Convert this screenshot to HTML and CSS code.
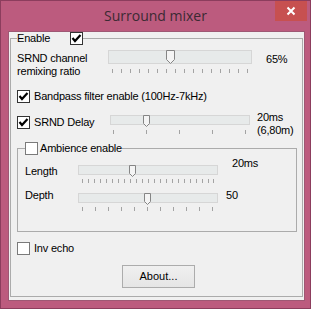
FILE: index.html
```html
<!DOCTYPE html>
<html lang="en">
<head>
  <meta charset="UTF-8">
  <title>Surround mixer</title>
  <link rel="stylesheet" href="styles.css">
</head>
<body>

  <div class="window">
    <div class="titlebar">
      <span></span>
      <span class="title">Surround mixer</span>
      <span class="caption">
        <span class="close">
          <svg width="10" height="10" viewBox="0 0 10 10"><path d="M1.5 1.5 L8.5 8.5 M8.5 1.5 L1.5 8.5" stroke="#fff" stroke-width="2"/></svg>
        </span>
      </span>
    </div>

    <div class="client">
      <fieldset class="group main">
        <legend class="legend">
          <span class="enable-label">Enable</span>
          <span class="check on"><svg width="11" height="11" viewBox="0 0 11 11"><polyline points="1.5,5 4,8 9.5,2" fill="none" stroke="#000" stroke-width="2.2"/></svg></span>
        </legend>

        <div class="row row-ratio">
          <div class="label">SRND channel<br>remixing ratio</div>
          <div class="slider">
            <div class="track big"><span class="thumb" style="left:57px"><svg width="9" height="14"><polygon points="0.5,0.5 8.5,0.5 8.5,9.5 4.5,13.5 0.5,9.5" fill="#f4f4f4" stroke="#858585"/></svg></span></div>
            <div class="ticks ticks-ratio"></div>
          </div>
          <div class="value">65%</div>
        </div>

        <label class="check-row bandpass">
          <span class="check on"><svg width="11" height="11" viewBox="0 0 11 11"><polyline points="1.5,5 4,8 9.5,2" fill="none" stroke="#000" stroke-width="2.2"/></svg></span>
          Bandpass filter enable (100Hz-7kHz)
        </label>

        <div class="row row-delay">
          <label class="check-row">
            <span class="check on"><svg width="11" height="11" viewBox="0 0 11 11"><polyline points="1.5,5 4,8 9.5,2" fill="none" stroke="#000" stroke-width="2.2"/></svg></span>
            SRND Delay
          </label>
          <div class="slider">
            <div class="track"><span class="thumb" style="left:32px"><svg width="7" height="12"><polygon points="0.5,0.5 6.5,0.5 6.5,8.5 3.5,11.5 0.5,8.5" fill="#f4f4f4" stroke="#858585"/></svg></span></div>
            <div class="ticks ticks-delay"></div>
          </div>
          <div class="value">20ms<br>(6,80m)</div>
        </div>

        <fieldset class="group ambience">
          <legend class="legend">
            <span class="check"></span>
            <span class="amb-label">Ambience enable</span>
          </legend>

          <div class="row row-length">
            <div class="label">Length</div>
            <div class="slider">
              <div class="track"><span class="thumb" style="left:50px"><svg width="7" height="12"><polygon points="0.5,0.5 6.5,0.5 6.5,8.5 3.5,11.5 0.5,8.5" fill="#f4f4f4" stroke="#858585"/></svg></span></div>
              <div class="ticks ticks-length"></div>
            </div>
            <div class="value">20ms</div>
          </div>

          <div class="row row-depth">
            <div class="label">Depth</div>
            <div class="slider">
              <div class="track"><span class="thumb" style="left:65px"><svg width="7" height="12"><polygon points="0.5,0.5 6.5,0.5 6.5,8.5 3.5,11.5 0.5,8.5" fill="#f4f4f4" stroke="#858585"/></svg></span></div>
              <div class="ticks ticks-depth"></div>
            </div>
            <div class="value">50</div>
          </div>
        </fieldset>

        <label class="check-row inv">
          <span class="check"></span>
          Inv echo
        </label>

        <button class="about">About...</button>
      </fieldset>
    </div>
  </div>

</body>
</html>
```

FILE: styles.css
```css
body {
  margin: 0;
  font-family: "Liberation Sans", Arial, sans-serif;
  font-size: 11px;
  line-height: 13px;
  letter-spacing: -0.2px;
  color: #000;
  background-color: #bc5b7e;
}

.window {
  width: 311px;
  height: 309px;
  box-sizing: border-box;
  border: 1px solid #8c3d5d;
  background-color: #bc5b7e;
}

/* title bar */
.titlebar {
  height: 30px;
  display: grid;
  grid-template-columns: 1fr auto 1fr;
}

.title {
  font-family: "Open Sans", sans-serif;
  font-size: 14px;
  line-height: 20px;
  letter-spacing: 0;
  padding-top: 5px;
  color: #3b2a33;
}

.caption { justify-self: end; margin-right: 3px; }

.close {
  width: 32px;
  height: 20px;
  background-color: #c75050;
  display: flex;
  align-items: center;
  justify-content: center;
}

/* client area */
.client {
  margin: 0 5px 0 7px;
  height: 270px;
  box-sizing: border-box;
  border: 1px solid #9e5874;
  background-color: #f0f0f0;
}

.group {
  box-sizing: border-box;
  border: 1px solid #ababab;
  margin: 0;
  min-inline-size: 0;
}

.main {
  margin: 0 1px;
  height: 265px;
  padding: 0 5px 0 6px;
}

.legend {
  padding: 0;
  display: flex;
  align-items: center;
}

.enable-label { width: 53px; }

.check {
  width: 13px;
  height: 13px;
  box-sizing: border-box;
  border: 1px solid #7a7a7a;
  background-color: #fff;
  display: block;
  flex: none;
}
.check.on { border-color: #333; }
.check svg { display: block; }

.check-row {
  display: flex;
  align-items: center;
  gap: 4px;
}

.row {
  display: flex;
  align-items: flex-start;
}

/* sliders */
.track {
  position: relative;
  width: 140px;
  height: 10px;
  box-sizing: border-box;
  border: 1px solid #d6d6d6;
  background-color: #e7eaea;
}
.track.big { width: 144px; height: 14px; }

.thumb {
  position: absolute;
  top: -1px;
  display: block;
}
.thumb svg { display: block; }

.ticks {
  height: 4px;
  margin-top: 5px;
}
.ticks-ratio {
  width: 136px;
  margin-left: 4px;
  background: repeating-linear-gradient(to right, #a3a3a3 0 1px, transparent 1px 9px);
}
.ticks-delay {
  width: 133px;
  margin-left: 3px;
  background: repeating-linear-gradient(to right, #a3a3a3 0 1px, transparent 1px 33px);
}
.ticks-length {
  width: 131px;
  margin-left: 4px;
  margin-top: 4px;
  border-right: 1px solid #a3a3a3;
  background: repeating-linear-gradient(to right, #a3a3a3 0 1px, transparent 1px 6px);
}
.ticks-depth {
  width: 131px;
  margin-left: 4px;
  margin-top: 4px;
  background: repeating-linear-gradient(to right, #a3a3a3 0 1px, transparent 1px 13px);
}

/* rows */
.row-ratio { margin-top: 5px; height: 28px; }
.row-ratio .label { width: 91px; margin-top: 2px; }
.row-ratio .value { margin-left: 14px; margin-top: 3px; }

.bandpass { margin-top: 12px; }

.row-delay { margin-top: 12px; height: 22px; }
.row-delay .check-row { width: 93px; margin-top: 1px; }
.row-delay .value { margin-left: 7px; margin-top: -4px; }

.ambience {
  margin-top: 5px;
  width: 280px;
  height: 90px;
  padding: 0 6px 0 7px;
}
.amb-label { margin-left: 2px; }

.row-length { margin-top: 10px; height: 28px; }
.row-length .label { width: 53px; }
.row-length .value { margin-left: 14px; margin-top: -8px; }

.row-depth .label { width: 53px; margin-top: -4px; }
.row-depth .value { margin-left: 8px; margin-top: -4px; }

.inv { margin-top: 10px; }

.about {
  display: block;
  margin: 10px 0 0 105px;
  width: 73px;
  height: 23px;
  padding: 0;
  font: inherit;
  color: #000;
  border: 1px solid #acacac;
  background: linear-gradient(#f0f0f0, #e5e5e5);
}
```
